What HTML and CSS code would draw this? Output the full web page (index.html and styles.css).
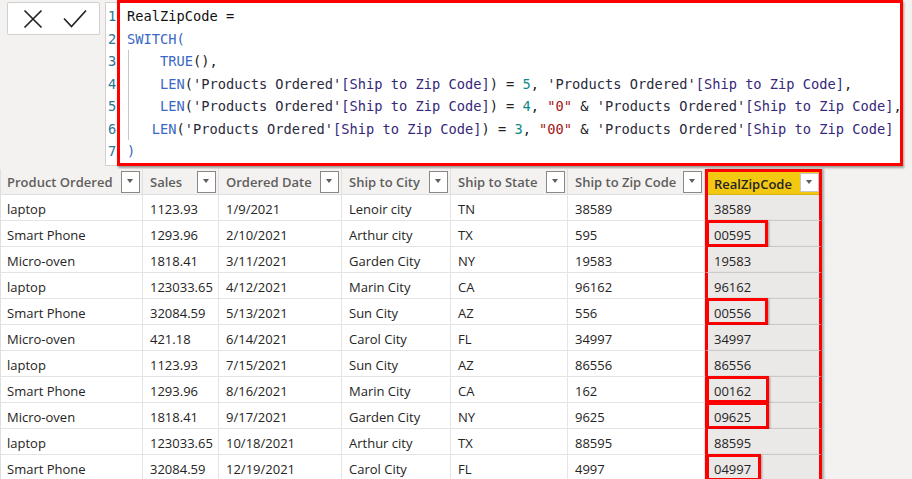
FILE: index.html
```html
<!DOCTYPE html>
<html>
<head>
<meta charset="utf-8">
<link rel="stylesheet" href="styles.css">
</head>
<body>
<div class="page">
  <div class="top">
    <div class="actions">
      <svg class="ico-x" width="20" height="20" viewBox="0 0 20 20"><path d="M1.5 1.5 L18.5 18.5 M18.5 1.5 L1.5 18.5" stroke="#252423" stroke-width="1.7" fill="none"/></svg>
      <svg class="ico-ok" width="24" height="19" viewBox="0 0 24 19"><path d="M1 9.5 L8.5 17.5 L23 1.5" stroke="#252423" stroke-width="1.7" fill="none"/></svg>
    </div>
    <div class="gutter">
      <div>1</div><div>2</div><div>3</div><div>4</div><div>5</div><div>6</div><div>7</div>
    </div>
    <div class="editor">
      <div class="line"><span class="tx">RealZipCode =</span></div>
      <div class="line"><span class="fn">SWITCH(</span></div>
      <div class="block">
        <div class="line">    <span class="fn">TRUE</span><span class="pn">(),</span></div>
        <div class="line">    <span class="fn">LEN</span><span class="pn">(</span><span class="tb">'Products Ordered'</span><span class="cl">[Ship to Zip Code]</span><span class="pn">) = </span><span class="nm">5</span><span class="pn">, </span><span class="tb">'Products Ordered'</span><span class="cl">[Ship to Zip Code]</span><span class="pn">,</span></div>
        <div class="line">    <span class="fn">LEN</span><span class="pn">(</span><span class="tb">'Products Ordered'</span><span class="cl">[Ship to Zip Code]</span><span class="pn">) = </span><span class="nm">4</span><span class="pn">, </span><span class="st">"0"</span><span class="pn"> &amp; </span><span class="tb">'Products Ordered'</span><span class="cl">[Ship to Zip Code]</span><span class="pn">,</span></div>
        <div class="line">   <span class="fn">LEN</span><span class="pn">(</span><span class="tb">'Products Ordered'</span><span class="cl">[Ship to Zip Code]</span><span class="pn">) = </span><span class="nm">3</span><span class="pn">, </span><span class="st">"00"</span><span class="pn"> &amp; </span><span class="tb">'Products Ordered'</span><span class="cl">[Ship to Zip Code]</span></div>
      </div>
      <div class="line"><span class="fn">)</span></div>
    </div>
  </div>

  <div class="grid">
    <div class="hd">Product Ordered<span class="dd"></span></div>
    <div class="hd">Sales<span class="dd"></span></div>
    <div class="hd">Ordered Date<span class="dd"></span></div>
    <div class="hd">Ship to City<span class="dd"></span></div>
    <div class="hd">Ship to State<span class="dd"></span></div>
    <div class="hd">Ship to Zip Code<span class="dd"></span></div>
    <div class="hd rz">RealZipCode<span class="dd"></span></div>

    <div class="c">laptop</div><div class="c">1123.93</div><div class="c">1/9/2021</div><div class="c">Lenoir city</div><div class="c">TN</div><div class="c">38589</div><div class="c rz">38589</div>
    <div class="c">Smart Phone</div><div class="c">1293.96</div><div class="c">2/10/2021</div><div class="c">Arthur city</div><div class="c">TX</div><div class="c">595</div><div class="c rz">00595<span class="mark"></span></div>
    <div class="c">Micro-oven</div><div class="c">1818.41</div><div class="c">3/11/2021</div><div class="c">Garden City</div><div class="c">NY</div><div class="c">19583</div><div class="c rz">19583</div>
    <div class="c">laptop</div><div class="c">123033.65</div><div class="c">4/12/2021</div><div class="c">Marin City</div><div class="c">CA</div><div class="c">96162</div><div class="c rz">96162</div>
    <div class="c">Smart Phone</div><div class="c">32084.59</div><div class="c">5/13/2021</div><div class="c">Sun City</div><div class="c">AZ</div><div class="c">556</div><div class="c rz">00556<span class="mark"></span></div>
    <div class="c">Micro-oven</div><div class="c">421.18</div><div class="c">6/14/2021</div><div class="c">Carol City</div><div class="c">FL</div><div class="c">34997</div><div class="c rz">34997</div>
    <div class="c">laptop</div><div class="c">1123.93</div><div class="c">7/15/2021</div><div class="c">Sun City</div><div class="c">AZ</div><div class="c">86556</div><div class="c rz">86556</div>
    <div class="c">Smart Phone</div><div class="c">1293.96</div><div class="c">8/16/2021</div><div class="c">Marin City</div><div class="c">CA</div><div class="c">162</div><div class="c rz">00162<span class="mark wide"></span></div>
    <div class="c">Micro-oven</div><div class="c">1818.41</div><div class="c">9/17/2021</div><div class="c">Garden City</div><div class="c">NY</div><div class="c">9625</div><div class="c rz">09625<span class="mark wide"></span></div>
    <div class="c">laptop</div><div class="c">123033.65</div><div class="c">10/18/2021</div><div class="c">Arthur city</div><div class="c">TX</div><div class="c">88595</div><div class="c rz">88595</div>
    <div class="c">Smart Phone</div><div class="c">32084.59</div><div class="c">12/19/2021</div><div class="c">Carol City</div><div class="c">FL</div><div class="c">4997</div><div class="c rz">04997<span class="mark short"></span></div>
  </div>
</div>
</body>
</html>
```

FILE: styles.css
```css
* { box-sizing: border-box; }
html, body { margin: 0; padding: 0; }
body { background: #f3f2f1; overflow: hidden; }
.page { width: 912px; height: 479px; overflow: hidden; background: #f3f2f1; }

.top { display: flex; align-items: flex-start; height: 169px; }

.actions {
  display: flex; align-items: center;
  width: 93px; height: 33px;
  margin: 2px 5px 0 7px;
  padding-left: 15px; gap: 20px;
  background: #fff;
  border: 1px solid #d2d0ce;
  border-radius: 2px;
}
.ico-x { margin-top: 1px; }

.gutter {
  width: 12px; height: 164px;
  margin-top: 2px;
  background: #fff;
  border: 1px solid #d2d0ce; border-right: none;
  padding: 2px 0 0 2px;
  font-family: "DejaVu Sans Mono", monospace;
  font-size: 13.7px; line-height: 22.5px;
  color: #237893;
}

.editor {
  width: 786px; height: 166px;
  background: #fff;
  border: 3px solid #ff0000;
  box-shadow: 1px 2px 2px rgba(0,0,0,0.35);
  padding: 2px 0 0 7px;
  font-family: "DejaVu Sans Mono", monospace;
  font-size: 13.7px; line-height: 22.5px;
  color: #1e1e1e;
  overflow: hidden;
}
.line { white-space: pre; height: 22.5px; }
.block { background: linear-gradient(#c8c6c4, #c8c6c4) no-repeat 1px 0 / 1px 100%; }
.tx { color: #111; }
.fn { color: #3a68c4; }
.pn { color: #222; }
.tb { color: #2b2b3d; }
.cl { color: #36287a; }
.nm { color: #0e8a8a; }
.st { color: #a31515; }

.grid {
  display: grid;
  grid-template-columns: 143px 76px 123px 109px 117px 137px 117px;
  grid-auto-rows: 26px;
  width: 822px;
  font-family: "Open Sans", "Noto Sans", sans-serif;
  font-size: 13px;
}
.hd {
  display: flex; align-items: center; justify-content: space-between;
  padding: 0 2px 0 7px;
  background: #f3f2f1;
  color: #605e5c; font-weight: 600;
  border-right: 1px solid #e1dfdd;
  border-bottom: 1px solid #e1dfdd;
  white-space: nowrap;
}
.hd:first-child { border-left: 1px solid #e1dfdd; padding-left: 6px; }
.dd {
  flex: none;
  width: 19px; height: 22px;
  background: #fff;
  border: 1px solid #8a8886;
  position: relative;
}
.dd::after {
  content: ""; position: absolute; left: 5px; top: 7px;
  border-left: 3.5px solid transparent; border-right: 3.5px solid transparent;
  border-top: 4px solid #605e5c;
}
.c {
  padding-left: 7px; padding-top: 2px;
  line-height: 25px;
  background: #fff;
  color: #252423;
  border-right: 1px solid #e6e4e2;
  border-bottom: 1px solid #e6e4e2;
  white-space: nowrap; overflow: hidden;
}
.grid > .c:nth-child(7n+1) { border-left: 1px solid #e1dfdd; padding-left: 6px; }

.hd.rz {
  background: #f2c811; color: #252423;
  border: 3px solid #ff0000; border-bottom: none;
  padding: 0 0 0 6px;
  box-shadow: 2px 0 2px rgba(0,0,0,0.3);
}
.hd.rz .dd { height: 19px; margin-top: -3px; border-color: #c8c6c4; }
.hd.rz .dd::after { top: 6px; }
.c.rz {
  background: #eae9e8;
  border-left: 3px solid #ff0000; border-right: 3px solid #ff0000;
  border-bottom: 1px solid #e1dfdd;
  padding-left: 6px;
  position: relative; overflow: visible;
  box-shadow: 2px 0 2px rgba(0,0,0,0.3);
}
.mark {
  position: absolute; left: -2px; top: -1px;
  width: 62px; height: 27px;
  border: 3px solid #ff0000;
  box-shadow: 1px 1px 2px rgba(0,0,0,0.35);
}
.mark.wide { width: 63px; }
.mark.short { width: 55px; }
```
